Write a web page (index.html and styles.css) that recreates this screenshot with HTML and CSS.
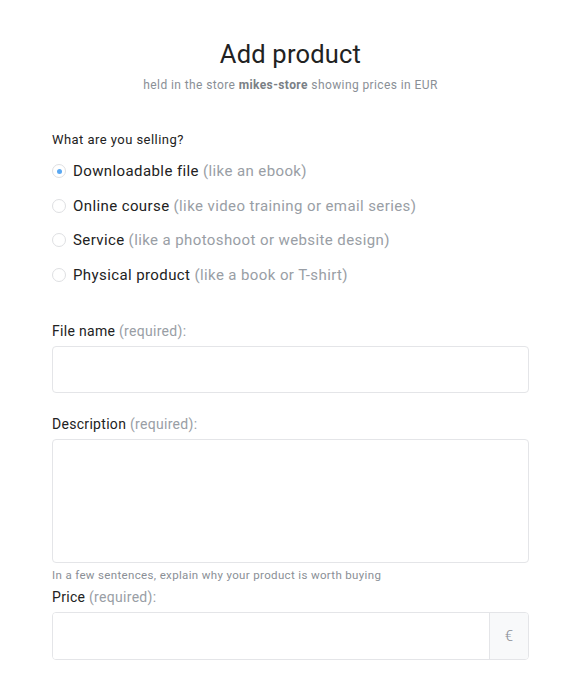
FILE: index.html
```html
<!DOCTYPE html>
<html>
<head>
<meta charset="utf-8">
<link rel="stylesheet" href="styles.css">
</head>
<body>
<div class="page">
  <h1 class="title">Add product</h1>
  <p class="subtitle">held in the store <b>mikes-store</b> showing prices in EUR</p>

  <div class="question">What are you selling?</div>
  <ul class="options">
    <li class="option"><span class="radio checked"></span><span class="opt-main">Downloadable file</span> <span class="muted">(like an ebook)</span></li>
    <li class="option"><span class="radio"></span><span class="opt-main">Online course</span> <span class="muted">(like video training or email series)</span></li>
    <li class="option"><span class="radio"></span><span class="opt-main">Service</span> <span class="muted">(like a photoshoot or website design)</span></li>
    <li class="option"><span class="radio"></span><span class="opt-main">Physical product</span> <span class="muted">(like a book or T-shirt)</span></li>
  </ul>

  <div class="field field-name">
    <label class="label">File name <span class="muted">(required):</span></label>
    <div class="input"></div>
  </div>

  <div class="field field-desc">
    <label class="label">Description <span class="muted">(required):</span></label>
    <div class="textarea"></div>
    <div class="help">In a few sentences, explain why your product is worth buying</div>
  </div>

  <div class="field field-price">
    <label class="label">Price <span class="muted">(required):</span></label>
    <div class="input-group">
      <div class="input grow"></div>
      <div class="addon">€</div>
    </div>
  </div>
</div>
</body>
</html>
```

FILE: styles.css
```css
html, body {
  margin: 0;
  padding: 0;
  background: #ffffff;
}
body {
  font-family: Roboto, "Liberation Sans", Arial, sans-serif;
  color: #222;
}
.page {
  width: 477px;
  margin: 0 0 0 52px;
  padding-top: 38px;
}
.title {
  margin: 0;
  text-align: center;
  font-size: 25.5px;
  font-weight: 400;
  line-height: 32px;
  color: #222;
  letter-spacing: 0.2px;
}
.subtitle {
  margin: 7px 0 0 0;
  text-align: center;
  font-size: 12px;
  line-height: 16px;
  color: #8a8f96;
  letter-spacing: 0.4px;
}
.subtitle b {
  color: #7a7f86;
  font-weight: 700;
}
.question {
  margin-top: 38px;
  font-size: 13px;
  line-height: 18px;
  color: #222;
  letter-spacing: 0.45px;
}
.options {
  list-style: none;
  margin: 12px 0 0 0;
  padding: 0;
}
.option {
  display: flex;
  align-items: center;
  height: 20px;
  margin-bottom: 14.5px;
  font-size: 15px;
  letter-spacing: 0.4px;
}
.radio {
  width: 14px;
  height: 14px;
  border: 1px solid #dedfe2;
  border-radius: 50%;
  box-sizing: border-box;
  margin-right: 7px;
  flex: none;
  display: flex;
  align-items: center;
  justify-content: center;
  background: #fff;
}
.radio.checked::after {
  content: "";
  width: 5px;
  height: 5px;
  border-radius: 50%;
  background: #5aa8f2;
}
.opt-main {
  color: #222;
  margin-right: 4px;
}
.muted {
  color: #999ea5;
}
.field-name {
  margin-top: 37px;
}
.field-desc {
  margin-top: 22px;
}
.field-price {
  margin-top: 6px;
}
.label {
  display: block;
  font-size: 14px;
  line-height: 18px;
  letter-spacing: 0.3px;
  color: #222;
  margin-bottom: 6px;
}
.input {
  height: 47px;
  border: 1px solid #e4e5e8;
  border-radius: 4px;
  box-sizing: border-box;
  background: #fff;
}
.textarea {
  height: 124px;
  border: 1px solid #e4e5e8;
  border-radius: 4px;
  box-sizing: border-box;
  background: #fff;
}
.help {
  margin-top: 5px;
  font-size: 11.5px;
  line-height: 14px;
  color: #8a8f96;
  letter-spacing: 0.35px;
}
.input-group {
  display: flex;
  height: 48px;
  border: 1px solid #e4e5e8;
  border-radius: 4px;
  box-sizing: border-box;
  overflow: hidden;
}
.input-group .input.grow {
  flex: 1;
  height: auto;
  border: none;
  border-radius: 0;
}
.addon {
  width: 38px;
  flex: none;
  border-left: 1px solid #e4e5e8;
  background: #f8f9fa;
  display: flex;
  align-items: center;
  justify-content: center;
  font-size: 15px;
  font-weight: 300;
  color: #8a8f96;
}
```
